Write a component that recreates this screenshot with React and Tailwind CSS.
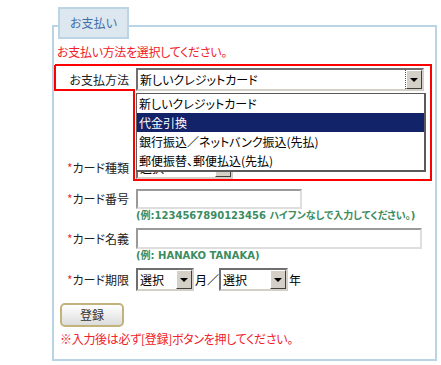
import React from "react";

const jp = "font-['Noto_Sans_CJK_JP',sans-serif] [font-feature-settings:'palt']";

const Arrow = () => (
    <div className="w-[16px] h-full bg-[#d4d0c8] border border-t-white border-l-white border-b-[#404040] border-r-[#404040] flex items-center justify-center">
        <div className="w-0 h-0 border-l-[4px] border-r-[4px] border-t-[4px] border-l-transparent border-r-transparent border-t-black" />
    </div>
);

const Select = ({ value, width, focus = false }) => (
    <div
        className={`${width} h-[23px] bg-white border-2 border-t-[#6f6f6f] border-l-[#6f6f6f] border-b-[#d4d0c8] border-r-[#d4d0c8] flex items-stretch`}
    >
        <div className="flex-1 flex items-center pl-[2px] text-[12px] text-black leading-none overflow-hidden whitespace-nowrap">
            {value}
        </div>
        {focus && <div className="w-px border-l border-dotted border-[#555]" />}
        <Arrow />
    </div>
);

const Input = ({ width, height }) => (
    <div
        className={`${width} ${height} bg-white border-2 border-t-[#9a9a9a] border-l-[#9a9a9a] border-b-[#dedede] border-r-[#dedede]`}
    />
);

const Label = ({ children, required = true }) => (
    <div className="w-[82px] pr-[7px] text-right text-[12px] text-[#222] leading-none whitespace-nowrap">
        {required && <span className="text-[#e8333a]">*</span>}
        {children}
    </div>
);

const Hint = ({ children }) => (
    <div className="ml-[82px] h-[14px] flex items-center text-[10px] font-bold text-[#3c8c60] leading-none whitespace-nowrap font-['DejaVu_Sans','Noto_Sans_CJK_JP',sans-serif] [font-feature-settings:'palt']">
        {children}
    </div>
);

const options = [
    "新しいクレジットカード",
    "代金引換",
    "銀行振込／ネットバンク振込(先払)",
    "郵便振替、郵便払込(先払)",
];

export default function App()
{
    return (
        <div className={`w-[441px] h-[365px] bg-white pt-[7px] pl-[52px] ${jp}`}>
            <div className="w-[385px]">
                <div className="relative z-10 ml-[6px] w-[71px] h-[32px] bg-[#dde7ef] border-2 border-[#bcd5e4] flex items-center justify-center text-[12px] text-[#3f6fa6]">
                    お支払い
                </div>
                <div className="relative -mt-[14px] h-[336px] border-2 border-[#b9d4e4] flex flex-col">
                    <div className="mt-[17px] ml-[3px] h-[16px] flex items-center text-[12px] text-[#f0202a] leading-none tracking-[-0.3px]">
                        お支払い方法を選択してください。
                    </div>

                    <div className="mt-[8px] flex items-center">
                        <Label required={false}>お支払方法</Label>
                        <Select value="新しいクレジットカード" width="w-[288px]" focus />
                    </div>

                    <div className="mt-[65px] flex items-center">
                        <Label>カード種類</Label>
                        <Select value="選択" width="w-[97px]" />
                    </div>

                    <div className="mt-[10px] flex items-center">
                        <Label>カード番号</Label>
                        <Input width="w-[166px]" height="h-[20px]" />
                    </div>
                    <Hint>(例:1234567890123456 ハイフンなしで入力してください。)</Hint>

                    <div className="mt-[5px] flex items-center">
                        <Label>カード名義</Label>
                        <Input width="w-[286px]" height="h-[21px]" />
                    </div>
                    <Hint>(例: HANAKO TANAKA)</Hint>

                    <div className="mt-[5px] flex items-center">
                        <Label>カード期限</Label>
                        <Select value="選択" width="w-[58px]" />
                        <span className="text-[12px] text-black leading-none ml-px">月／</span>
                        <Select value="選択" width="w-[69px]" />
                        <span className="text-[12px] text-black leading-none ml-px">年</span>
                    </div>

                    <button
                        type="button"
                        className="mt-[12px] ml-[6px] w-[64px] h-[24px] rounded-[5px] border-2 border-[#c2b27c] bg-linear-to-b from-white to-[#dcdcdc] text-[12px] text-[#333] leading-none"
                    >
                        登録
                    </button>

                    <div className="mt-[4px] ml-[6px] h-[16px] flex items-center text-[12px] text-[#f0202a] leading-none tracking-[-0.3px]">
                        ※入力後は必ず[登録]ボタンを押してください。
                    </div>

                    {/* dropdown list */}
                    <div className="absolute left-[82px] top-[66px] w-[290px] h-[79px] bg-white border border-[#5a5a5a] border-r-2 border-b-2 flex flex-col z-20">
                        {options.map((o, i) => (
                            <div
                                key={i}
                                className={`h-[19.5px] flex items-center pl-[2px] text-[12px] leading-none whitespace-nowrap ${i === 1 ? "bg-[#13236a] text-white" : "text-black"}`}
                            >
                                {o}
                            </div>
                        ))}
                    </div>

                    {/* red highlight outline */}
                    <svg
                        className="absolute left-0 top-0 z-30 pointer-events-none"
                        width="385"
                        height="336"
                        viewBox="0 0 385 336"
                    >
                        <polyline
                            points="1,38 377,38 377,153 80,153 80,63 1,63 1,38"
                            fill="none"
                            stroke="#ff0000"
                            strokeWidth="2"
                        />
                    </svg>
                </div>
            </div>
        </div>
    );
}
